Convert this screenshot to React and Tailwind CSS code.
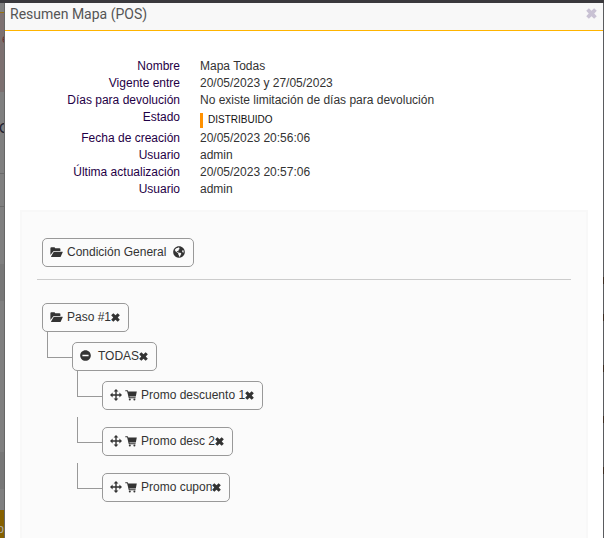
import React from 'react';
import { FaGlobeAmericas, FaMinusCircle } from 'react-icons/fa';

const details = [
  { label: 'Nombre', value: 'Mapa Todas' },
  { label: 'Vigente entre', value: '20/05/2023 y 27/05/2023' },
  {
    label: 'Días para devolución',
    value: 'No existe limitación de días para devolución',
  },
  { label: 'Estado', value: 'DISTRIBUIDO', badge: true },
  { label: 'Fecha de creación', value: '20/05/2023 20:56:06' },
  { label: 'Usuario', value: 'admin' },
  { label: 'Última actualización', value: '20/05/2023 20:57:06' },
  { label: 'Usuario', value: 'admin' },
];

const promos = ['Promo descuento 1', 'Promo desc 2', 'Promo cupon'];

function CloseIcon({ className }) {
  return (
    <svg viewBox="0 0 10 10" fill="currentColor" className={className}>
      <path d="M2.6 0.2 5 2.5 7.4 0.2 9.8 2.6 7.5 5 9.8 7.4 7.4 9.8 5 7.5 2.6 9.8 0.2 7.4 2.5 5 0.2 2.6Z" />
    </svg>
  );
}

function FolderIcon() {
  return (
    <svg viewBox="0 0 13 12" fill="currentColor" className="mr-1 h-3 w-[13px]">
      <path d="M0.4 9V2.2Q0.4 1.2 1.4 1.2H4.2Q5 1.2 5.2 2.2H9.4Q10.4 2.2 10.4 3.1V5H4.2Q3.4 5 3 5.7Z" />
      <path d="M4.4 5.7H12.4Q13 5.7 12.7 6.3L10.8 10.4Q10.5 11 9.8 11H1.4Q0.8 11 1.1 10.4L3.5 6.3Q3.8 5.7 4.4 5.7Z" />
    </svg>
  );
}

function MoveIcon() {
  return (
    <svg viewBox="0 0 12 12" fill="currentColor" className="mr-[3px] h-3 w-3">
      <path d="M6 0 8.4 2.6H6.7V5.3H9.4V3.6L12 6 9.4 8.4V6.7H6.7V9.4H8.4L6 12 3.6 9.4H5.3V6.7H2.6V8.4L0 6 2.6 3.6V5.3H5.3V2.6H3.6Z" />
    </svg>
  );
}

function CartIcon() {
  return (
    <svg viewBox="0 0 12 12" fill="currentColor" className="mr-1 h-3 w-3">
      <path d="M0.3 1.2H2.4Q2.9 1.2 3 1.7L3.2 2.4H11.8L10.8 7.4H4.4L4.6 8.2H10.6V9.2H3.8L2.1 2.2H0.3Z" />
      <circle cx="4.8" cy="10.5" r="1" />
      <circle cx="9.4" cy="10.5" r="1" />
    </svg>
  );
}

function Node({ icon, label, children }) {
  return (
    <div className="flex h-[29px] items-center rounded-[5px] border border-[#999] pr-2 pl-[7px] whitespace-nowrap">
      <span className="flex items-center pb-[2px]">{icon}</span>
      <span>{label}</span>
      {children}
    </div>
  );
}

function RemoveButton({ label }) {
  return (
    <button type="button" aria-label={`Quitar ${label}`}>
      <CloseIcon className="h-[9px] w-[9px]" />
    </button>
  );
}

function Branch({ children }) {
  return (
    <li className="flex items-start">
      <span className="h-[26px] w-[25px] shrink-0 border-b border-l border-[#999]" />
      {children}
    </li>
  );
}

// dimmed page behind the dialog
function Backdrop() {
  return (
    <div
      aria-hidden="true"
      className="flex w-[5px] shrink-0 flex-col overflow-hidden border-r border-[#666] bg-[#7f7f7f]"
    >
      <div className="h-[10px] shrink-0 border-b border-[#94700f]" />
      <div className="h-[79px] shrink-0 bg-[#7c7070] pt-[18px] pl-[2px] text-[#6b3030]">
        e
      </div>
      <div className="flex h-[82px] shrink-0 justify-center border-b border-[#6a6a6a] pt-7 text-[14px] text-[#222232]">
        IC
      </div>
      <div className="h-[33px] shrink-0 border-b border-[#6a6a6a]" />
      <div className="h-[57px] shrink-0" />
      <div className="h-[37px] shrink-0 bg-[#777]" />
      <div className="h-[151px] shrink-0" />
      <div className="h-[37px] shrink-0 bg-[#777]" />
      <div className="h-[21px] shrink-0" />
      <div className="flex grow justify-end bg-[#856000] pt-[11px] text-[#aaa]">
        o
      </div>
    </div>
  );
}

function BackdropEdge() {
  return (
    <div
      aria-hidden="true"
      className="flex w-px shrink-0 flex-col bg-[#5a5b5e] pt-[274px]"
    >
      <div className="h-[7px] bg-[#3b2c22]" />
      <div className="mt-[30px] h-[7px] bg-[#3b2c22]" />
      <div className="mt-11 h-[7px] bg-[#3b2c22]" />
      <div className="mt-11 h-[7px] bg-[#3b2c22]" />
      <div className="mt-11 h-[7px] bg-[#3b2c22]" />
    </div>
  );
}

export default function App() {
  return (
    <div className="flex min-h-screen flex-col bg-[#3a393d] font-['Liberation_Sans',Arial,sans-serif] text-[12px] leading-[17px] text-[#333]">
      <div className="h-[3px]" />
      <div className="flex grow">
        <Backdrop />
        <section
          role="dialog"
          aria-labelledby="title"
          className="flex min-w-0 grow flex-col bg-white"
        >
          <header className="flex h-7 items-center justify-between border-b border-[#ffb400] bg-[#f8f8f8] pr-[6px] pb-[6px] pl-[5px]">
            <h1
              id="title"
              className="font-[Roboto,sans-serif] text-[14px] leading-5 text-[#555]"
            >
              Resumen Mapa (POS)
            </h1>
            <button type="button" aria-label="Cerrar" className="text-[#c9c2d4]">
              <CloseIcon className="h-[11px] w-[11px]" />
            </button>
          </header>

          <dl className="px-[15px] pt-[27px]">
            {details.map(({ label, value, badge }, i) => (
              <div key={i} className="flex gap-5">
                <dt className="w-40 shrink-0 text-right text-[#1f0046]">
                  {label}
                </dt>
                {badge ? (
                  <dd className="mt-1 mb-[2px] h-[15px] border-l-[3px] border-[#ff9100] pl-[5px] text-[10px] leading-[13px] text-[#111]">
                    {value}
                  </dd>
                ) : (
                  <dd>{value}</dd>
                )}
              </div>
            ))}
          </dl>

          <main className="mx-[15px] mt-3 grow border-2 border-b-0 border-[#f8f8f8] bg-[#fbfbfb] px-[15px] pt-[26px]">
            <div className="flex pl-[5px]">
              <Node icon={<FolderIcon />} label="Condición General">
                <span className="pb-[2px] pl-[7px]">
                  <FaGlobeAmericas className="h-3 w-3" />
                </span>
              </Node>
            </div>
            <hr className="mt-3 mb-[23px] border-[#ccc]" />

            <div className="pl-[5px]">
              <div className="flex">
                <Node icon={<FolderIcon />} label="Paso #1">
                  <RemoveButton label="Paso #1" />
                </Node>
              </div>
              <ul className="pl-[5px]">
                <Branch>
                  <div className="pt-[10px]">
                    <div className="flex">
                      <Node
                        icon={<FaMinusCircle className="mr-[7px] h-[11px] w-[11px]" />}
                        label="TODAS"
                      >
                        <RemoveButton label="TODAS" />
                      </Node>
                    </div>
                    <ul className="flex flex-col gap-[7px] pl-[5px]">
                      {promos.map((promo) => (
                        <Branch key={promo}>
                          <div className="pt-[10px]">
                            <Node
                              icon={
                                <>
                                  <MoveIcon />
                                  <CartIcon />
                                </>
                              }
                              label={promo}
                            >
                              <RemoveButton label={promo} />
                            </Node>
                          </div>
                        </Branch>
                      ))}
                    </ul>
                  </div>
                </Branch>
              </ul>
            </div>
          </main>
        </section>
        <BackdropEdge />
      </div>
    </div>
  );
}
